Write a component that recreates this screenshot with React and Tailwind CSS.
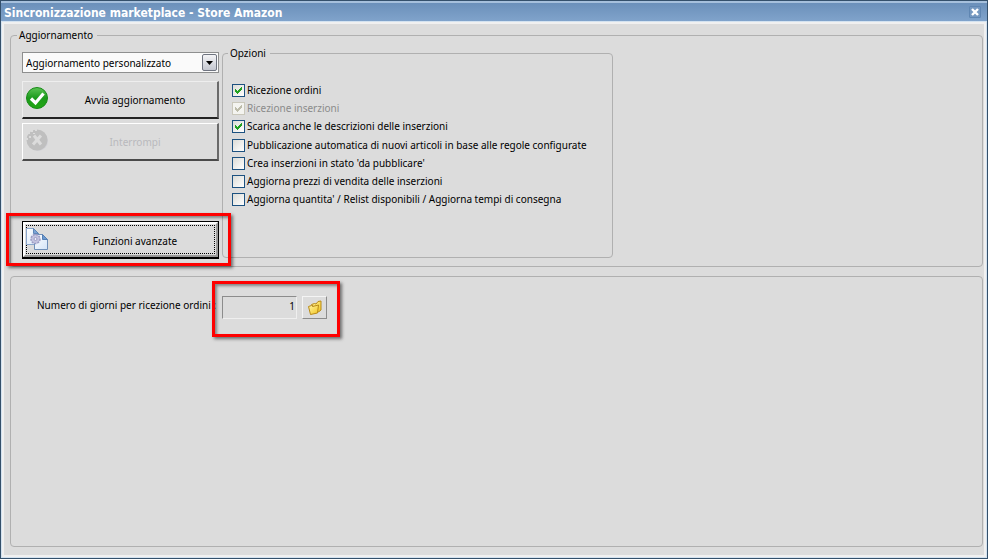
import { useState } from "react";

const updateModes = ["Aggiornamento personalizzato", "Aggiornamento completo"];

const receiveOptions = [
  { id: "ordini", label: "Ricezione ordini", checked: true },
  { id: "inserzioni", label: "Ricezione inserzioni", checked: true, disabled: true },
  { id: "descrizioni", label: "Scarica anche le descrizioni delle inserzioni", checked: true },
];

const publishOptions = [
  {
    id: "pubblicazione",
    label: "Pubblicazione automatica di nuovi articoli in base alle regole configurate",
  },
  { id: "crea", label: "Crea inserzioni in stato 'da pubblicare'" },
  { id: "prezzi", label: "Aggiorna prezzi di vendita delle inserzioni" },
  { id: "quantita", label: "Aggiorna quantita' / Relist disponibili / Aggiorna tempi di consegna" },
];

function CheckOption({ id, label, checked = false, disabled = false }) {
  const [on, setOn] = useState(checked);
  return (
    <div className="flex h-[18px] items-center gap-0.5">
      <span className="relative h-[13px] w-[13px] shrink-0">
        <input
          id={id}
          type="checkbox"
          checked={on}
          disabled={disabled}
          onChange={(e) => setOn(e.target.checked)}
          className="block h-[13px] w-[13px] appearance-none border border-[#1c5180] bg-linear-to-br from-[#dcdcd7] to-white disabled:border-[#cac8bb] disabled:bg-none disabled:bg-[#f4f4f0]"
        />
        {on && (
          <svg
            viewBox="0 0 13 13"
            className={
              disabled
                ? "pointer-events-none absolute inset-0 text-[#bdbcaa]"
                : "pointer-events-none absolute inset-0 text-[#21a121]"
            }
            fill="currentColor"
            shapeRendering="crispEdges"
            aria-hidden="true"
          >
            <path d="M3 5h1v1h1v1h1v-1h1v-1h1v-1h1v-1h1v3h-1v1h-1v1h-1v1h-1v1h-1v-1h-1v-1h-1z" />
          </svg>
        )}
      </span>
      <label htmlFor={id} className={disabled ? "whitespace-nowrap text-[#8b8b8b]" : "whitespace-nowrap"}>
        {label}
      </label>
    </div>
  );
}

function OkIcon() {
  return (
    <svg viewBox="0 0 22 22" className="h-[22px] w-[22px]" aria-hidden="true">
      <defs>
        <linearGradient id="ok" x1="0" y1="0" x2="0" y2="1">
          <stop offset="0" stopColor="#5cc455" />
          <stop offset="0.5" stopColor="#1c9a1c" />
          <stop offset="1" stopColor="#22a812" />
        </linearGradient>
      </defs>
      <circle cx="11" cy="11" r="10.5" fill="url(#ok)" stroke="#178a17" />
      <path d="M5 11.5l4.500 4.500L17.500 6.500" fill="none" stroke="#fff" strokeWidth="3.200" />
    </svg>
  );
}

function StopIcon() {
  return (
    <svg viewBox="0 0 22 22" className="h-[22px] w-[22px]" aria-hidden="true">
      <circle cx="12" cy="12" r="10" fill="#d0d0d6" />
      <circle cx="11" cy="11" r="10.500" fill="#bfbfbf" />
      <path d="M8 6.500l7 9M15 6.500l-8 9" stroke="#dcdcdc" strokeWidth="3" />
      <path
        d="M1 3h3v2H1zM5 1h2v2H5zM3 7h2v2H3zM0 9h2v2H0zM7 4h2v1H7zM9 0h2v2H9z"
        fill="#dcdcdc"
      />
    </svg>
  );
}

function DocumentsIcon() {
  return (
    <svg viewBox="0 0 22 22" className="h-[22px] w-[22px]" aria-hidden="true">
      <defs>
        <linearGradient id="sheet" x1="0" y1="0" x2="1" y2="1">
          <stop offset="0" stopColor="#ffffff" />
          <stop offset="1" stopColor="#d3e4f8" />
        </linearGradient>
      </defs>
      <path d="M.5.500h7l5 5v11H.5z" fill="url(#sheet)" stroke="#8aa6cc" />
      <path d="M7.500.500v5h5z" fill="#7ba4d6" stroke="#5e86b8" />
      <path d="M8.500 6.500h8l5 5v10h-13z" fill="url(#sheet)" stroke="#6f8fb8" />
      <path d="M16.500 6.500v5h5z" fill="#6d9ad0" stroke="#547fb4" />
      <circle cx="9.500" cy="11" r="4.500" fill="#c3c3df" stroke="#9c9cc4" strokeWidth="1.500" strokeDasharray="2 1" />
      <circle cx="9.500" cy="11" r="1.500" fill="#eef0fa" stroke="#9c9cc4" />
    </svg>
  );
}

function FolderIcon() {
  return (
    <svg viewBox="0 0 16 16" className="h-4 w-4" aria-hidden="true">
      <defs>
        <linearGradient id="folder" x1="0" y1="0" x2="1" y2="1">
          <stop offset="0" stopColor="#fff6a8" />
          <stop offset="1" stopColor="#f2c41c" />
        </linearGradient>
      </defs>
      <path d="M4.500 4.500l3-1 1.500.500 2-2.500 3-.500v9l-2.500 2z" fill="url(#folder)" stroke="#b88a18" />
      <path d="M1.500 6.500l3-1 1 1 6-1.500-1 8-7 1.500z" fill="url(#folder)" stroke="#b88a18" />
    </svg>
  );
}

function Highlight({ className }) {
  return (
    <span
      className={`pointer-events-none absolute border-3 border-[#fe0000] shadow-[2px_2px_3px_rgba(0,0,0,0.5),inset_2px_2px_3px_rgba(0,0,0,0.4)] ${className}`}
    />
  );
}

const groupBox = "min-w-0 rounded-[4px] border border-[#b0b0b0]";

export default function App() {
  const [mode, setMode] = useState(updateModes[0]);
  return (
    <main className="flex min-h-screen flex-col border border-[#34506b] bg-[#dcdcdc] font-['Noto_Sans','Open_Sans',sans-serif] text-[10px] leading-[14px] text-black">
      <header className="flex h-5 shrink-0 items-center justify-between border-t-2 border-[#a6c0dc] bg-linear-to-b from-[#6b90ba] to-[#80a3cb] pr-[6px] pl-[3px]">
        <h1 className="pt-0.5 font-['DejaVu_Sans_Condensed','DejaVu_Sans',sans-serif] text-[12px] leading-4 font-bold whitespace-nowrap text-white">
          Sincronizzazione marketplace - Store Amazon
        </h1>
        <button
          type="button"
          aria-label="Chiudi"
          className="flex h-3 w-3 items-center justify-center rounded-[1px] border border-[#5f86b2] bg-[#7598c0]"
        >
          <svg viewBox="0 0 8 8" className="h-2 w-2 shrink-0" aria-hidden="true">
            <path d="M1 1l6 6M7 1L1 7" stroke="#fff" strokeWidth="2.400" />
          </svg>
        </button>
      </header>

      <div className="flex flex-1 flex-col border border-[#d3e2f0]">
        <div className="flex flex-1 flex-col gap-[9px] border-2 border-[#f0f0f0] pt-1 pr-px pb-2 pl-[6px]">
          <fieldset className={`${groupBox} pb-[7px] pl-[11px]`}>
            <legend className="-ml-[5px] pr-1 pl-0.5">Aggiornamento</legend>
            <div className="flex gap-[3px] pt-1">
              <div className="flex w-[197px] shrink-0 flex-col pt-[6px]">
                <div className="relative">
                  <select
                    aria-label="Tipo di aggiornamento"
                    value={mode}
                    onChange={(e) => setMode(e.target.value)}
                    className="block h-[21px] w-full appearance-none rounded-none border border-[#8e8f8f] bg-[#fafafa] pr-5 pl-[3px]"
                  >
                    {updateModes.map((m) => (
                      <option key={m}>{m}</option>
                    ))}
                  </select>
                  <span className="pointer-events-none absolute top-0.5 right-0.5 flex h-[17px] w-[15px] items-center justify-center rounded-[2px] border border-[#6f7480] bg-linear-to-b from-[#f4f4f6] to-[#c4c7d0]">
                    <svg viewBox="0 0 7 4" className="h-1 w-[7px]" aria-hidden="true">
                      <path d="M0 0h7L3.500 4z" fill="#000" />
                    </svg>
                  </span>
                </div>

                <button
                  type="button"
                  className="mt-2 flex h-[38px] items-center border-t border-r-2 border-b-2 border-l border-t-[#eeeeee] border-r-[#6a6a6a] border-b-[#222222] border-l-[#eeeeee] px-[3px] pb-1"
                >
                  <OkIcon />
                  <span className="flex-1 pt-1 pl-2">Avvia aggiornamento</span>
                </button>
                <button
                  type="button"
                  disabled
                  className="mt-1 flex h-[38px] items-center border-t border-r-2 border-b-2 border-l border-t-white border-r-[#6a6a6a] border-b-[#4a4a4a] border-l-white px-[3px] pb-1 text-[#b9b9bd]"
                >
                  <StopIcon />
                  <span className="flex-1 pt-1 pl-2">Interrompi</span>
                </button>
                <div className="relative mt-[60px]">
                  <button
                    type="button"
                    className="flex h-[38px] w-full border border-b-2 border-black"
                  >
                    <span className="flex h-full w-full border-2 border-t-white border-r-[#9a9a9a] border-b-[#9a9a9a] border-l-white p-px">
                      <span className="flex h-full w-full items-center border border-dotted border-black">
                        <span className="-ml-px pb-0.5">
                          <DocumentsIcon />
                        </span>
                        <span className="flex-1 pt-0.5 pl-2">Funzioni avanzate</span>
                      </span>
                    </span>
                  </button>
                  <Highlight className="-top-2 -right-3 -bottom-[7px] -left-4" />
                </div>
              </div>

              <fieldset className={`${groupBox} mb-px w-[391px] pl-[9px]`}>
                <legend className="-ml-[4px] pr-1 pl-0.5">Opzioni</legend>
                <div className="flex flex-col gap-px pt-[21px]">
                  <div>
                    {receiveOptions.map((o) => (
                      <CheckOption key={o.id} {...o} />
                    ))}
                  </div>
                  <div>
                    {publishOptions.map((o) => (
                      <CheckOption key={o.id} {...o} />
                    ))}
                  </div>
                </div>
              </fieldset>
            </div>
          </fieldset>

          <section className={`${groupBox} flex-1 pt-[19px] pl-[26px]`}>
            <div className="flex items-start">
              <label htmlFor="giorni" className="w-[185px] pt-0.5 whitespace-nowrap">
                Numero di giorni per ricezione ordini :
              </label>
              <div className="relative flex items-start gap-[5px]">
                <input
                  id="giorni"
                  type="text"
                  defaultValue="1"
                  className="h-[23px] w-[75px] border border-t-[#8c8c8c] border-r-[#efefef] border-b-[#efefef] border-l-[#8c8c8c] bg-transparent pr-px pb-1 text-right"
                />
                <button
                  type="button"
                  aria-label="Sfoglia"
                  className="flex h-[23px] w-[25px] items-center justify-center border border-t-[#f4f4f4] border-r-[#8c8c8c] border-b-[#8c8c8c] border-l-[#f4f4f4]"
                >
                  <FolderIcon />
                </button>
                <Highlight className="-top-[15px] -right-[13px] -bottom-[18px] -left-[10px]" />
              </div>
            </div>
          </section>
        </div>
      </div>
    </main>
  );
}
